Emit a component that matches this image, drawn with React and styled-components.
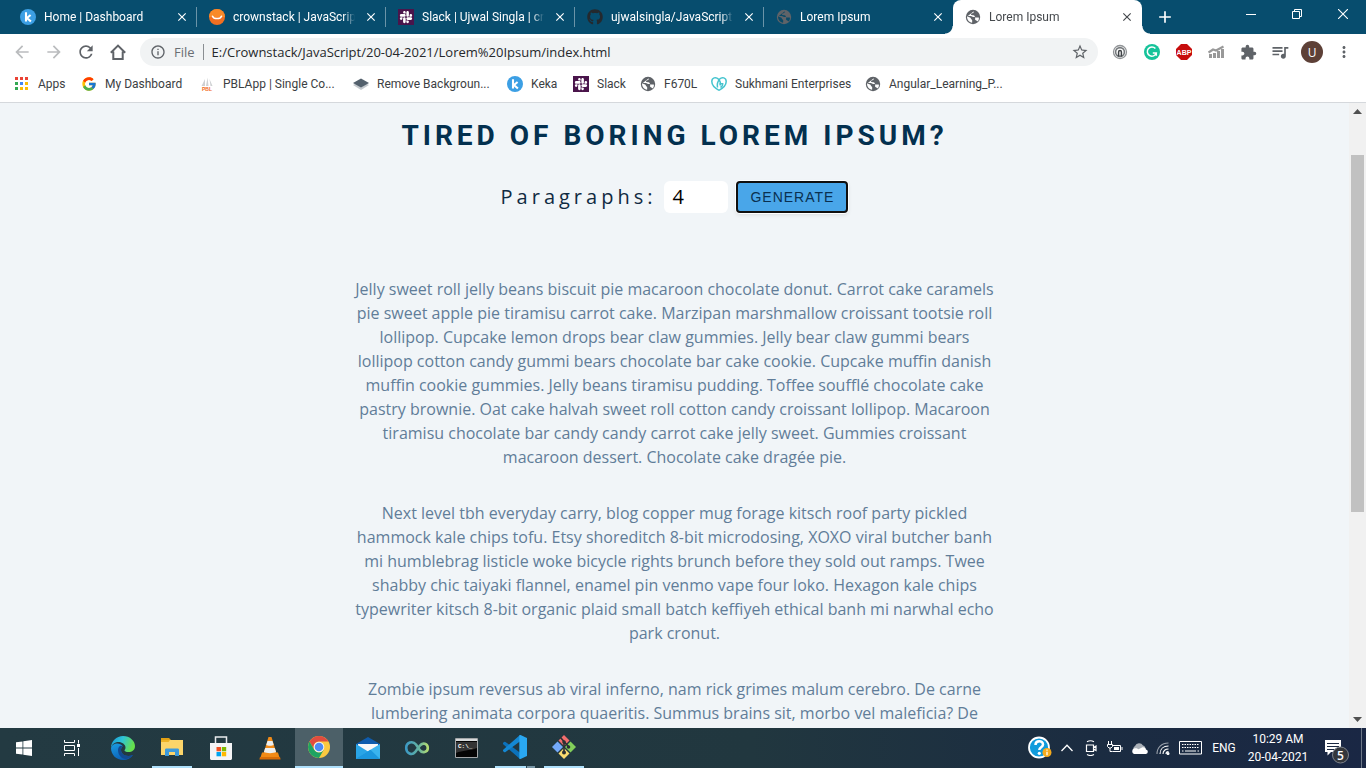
import React from "react";
import styled, { createGlobalStyle, css } from "styled-components";
import {
  MdArrowBack,
  MdArrowForward,
  MdRefresh,
  MdStarOutline,
  MdExtension,
  MdQueueMusic,
  MdMoreVert,
  MdOutlineInfo,
  MdClose,
  MdAdd,
} from "react-icons/md";
import { FaGithub, FaSlack } from "react-icons/fa";
import { FcGoogle } from "react-icons/fc";

const GlobalStyle = createGlobalStyle`
  *, *::before, *::after { box-sizing: border-box; }
  body {
    margin: 0;
    font-family: "Open Sans", "Noto Sans", sans-serif;
    background: #f1f5f8;
  }
  button { border: 0; padding: 0; background: none; color: inherit; font: inherit; }
  a { color: inherit; text-decoration: none; }
  svg { display: block; flex: none; }
`;

const Desktop = styled.div`
  display: flex;
  flex-direction: column;
  height: 100vh;
  overflow: hidden;
`;

/* ---------- browser chrome ---------- */

const TabStrip = styled.header`
  display: flex;
  flex: none;
  height: 34px;
  padding-left: 8px;
  background: #074d6e;
  color: #fff;
`;

const Tabs = styled.div`
  display: flex;
  flex: 0 1 auto;
  min-width: 0;
`;

const Tab = styled.div`
  position: relative;
  display: flex;
  align-items: center;
  gap: 8px;
  flex: 0 1 189px;
  width: 189px;
  min-width: 0;
  padding: 0 7px 0 12px;
  font: 12px Roboto, sans-serif;

  ${({ $divided }) =>
    $divided &&
    css`
      background: linear-gradient(#6b94a8, #6b94a8) right center / 1px 20px no-repeat;
    `}

  ${({ $active }) =>
    $active &&
    css`
      background: #fff;
      color: #45494d;
      border-radius: 8px 8px 0 0;
      &::before,
      &::after {
        content: "";
        position: absolute;
        bottom: 0;
        width: 8px;
        height: 8px;
      }
      &::before {
        left: -8px;
        background: radial-gradient(circle at 0 0, transparent 7px, #fff 8px);
      }
      &::after {
        right: -8px;
        background: radial-gradient(circle at 100% 0, transparent 7px, #fff 8px);
      }
    `}
`;

const TabTitle = styled.span`
  flex: 1;
  min-width: 0;
  white-space: nowrap;
  mask-image: linear-gradient(to right, #000 calc(100% - 12px), transparent);
`;

const IconButton = styled.button`
  display: flex;
  align-items: center;
  justify-content: center;
  flex: none;
  width: ${({ $size }) => $size || 32}px;
  height: ${({ $size }) => $size || 32}px;
  color: ${({ $color }) => $color || "inherit"};
`;

const NewTab = styled(IconButton)`
  margin: 3px 0 0 9px;
`;

const WindowControls = styled.div`
  display: flex;
  margin-left: auto;
`;

const WindowButton = styled.button`
  display: flex;
  align-items: center;
  justify-content: center;
  width: 46px;
  height: 28px;
`;

const Toolbar = styled.div`
  display: flex;
  align-items: center;
  flex: none;
  height: 36px;
  padding: 0 6px;
  background: #fff;
  color: #5f6368;
`;

const Omnibox = styled.form`
  display: flex;
  align-items: center;
  flex: 1;
  min-width: 0;
  height: 28px;
  margin: 0 6px;
  padding: 0 2px 0 10px;
  border-radius: 14px;
  background: #f1f3f4;
  font-size: 13px;
`;

const Scheme = styled.label`
  margin-left: 8px;
  padding-right: 8px;
  line-height: 16px;
  border-right: 1px solid #8a8e92;
  color: #6a6e73;
`;

const Address = styled.input`
  flex: 1;
  min-width: 0;
  margin: 0;
  padding: 0 8px;
  border: 0;
  outline: 0;
  background: none;
  color: #25282b;
  font: inherit;
`;

const Avatar = styled.span`
  display: flex;
  align-items: center;
  justify-content: center;
  width: 22px;
  height: 22px;
  border-radius: 50%;
  background: #5d4037;
  color: #fff;
  font-size: 12px;
`;

const Bookmarks = styled.nav`
  display: flex;
  flex: none;
  height: 33px;
  padding: 0 0 4px 14px;
  background: #fff;
  border-bottom: 1px solid #d5d8dc;
`;

const Bookmark = styled.a`
  display: flex;
  align-items: center;
  gap: 8px;
  flex: none;
  width: ${({ $width }) => $width}px;
  color: #3c4043;
  font: 12px Roboto, sans-serif;
  white-space: nowrap;
`;

/* ---------- page ---------- */

const Viewport = styled.div`
  display: flex;
  flex: 1;
  min-height: 0;
  background: #f1f5f8;
`;

const Page = styled.main`
  flex: 1;
  min-width: 0;
  overflow: hidden;
  text-align: center;
`;

const Title = styled.h1`
  margin: 0;
  padding-top: 15px;
  color: #03304f;
  font: 700 28px/36px Roboto, sans-serif;
  letter-spacing: 4px;
  text-transform: uppercase;
`;

const GenerateForm = styled.form`
  display: flex;
  align-items: center;
  justify-content: center;
  gap: 8px;
  height: 32px;
  margin: 27px 0 64px;
`;

const CountLabel = styled.label`
  padding-bottom: 2px;
  color: #102a42;
  font-size: 20px;
  letter-spacing: 4px;
`;

const CountInput = styled.input`
  width: 64px;
  height: 32px;
  padding: 2px 8px 4px;
  border: 0;
  border-radius: 6px;
  outline: 0;
  background: #fff;
  color: #000;
  font: 20px "Open Sans", sans-serif;
  appearance: textfield;
  &::-webkit-inner-spin-button { appearance: none; }
`;

const GenerateButton = styled.button`
  width: 112px;
  height: 32px;
  border: 2px solid #101010;
  border-radius: 4px;
  background: #49a6e9;
  color: #0a3050;
  font: 14px "Liberation Sans", Arial, sans-serif;
  letter-spacing: 1px;
  text-transform: uppercase;
  box-shadow: 0 0 0 1px #fff, 0 2px 4px rgba(0, 0, 0, 0.1);
`;

const Copy = styled.article`
  max-width: 642px;
  margin: 0 auto;
  color: #617d98;
  font-size: 16px;
  line-height: 24px;
`;

const Paragraph = styled.p`
  margin: 0 0 32px;
`;

const Scrollbar = styled.div`
  display: flex;
  flex-direction: column;
  align-items: center;
  flex: none;
  width: 17px;
  background: #f1f1f1;
  color: #505050;
`;

const ScrollTrack = styled.div`
  display: flex;
  flex-direction: column;
  flex: 1;
  width: 13px;
`;

const ScrollSpace = styled.div`
  flex: ${({ $share }) => $share};
`;

const ScrollThumb = styled.div`
  flex: 357;
  background: #c1c1c1;
`;

/* ---------- taskbar ---------- */

const Taskbar = styled.footer`
  display: flex;
  flex: none;
  height: 40px;
  background: linear-gradient(90deg, #233a42 0%, #21373f 55%, #1b2c41 80%, #1a2744 100%);
  color: #fff;
  font: 12px Roboto, sans-serif;
`;

const TaskGroup = styled.div`
  display: flex;
  gap: ${({ $gap }) => $gap || 0}px;
  margin-right: 3px;
`;

const TaskButton = styled.button`
  display: flex;
  flex-direction: column;
  align-items: center;
  width: 48px;
  height: 40px;
  background: ${({ $active }) => ($active ? "#4c6068" : "none")};
`;

const TaskIcon = styled.span`
  display: flex;
  align-items: center;
  justify-content: center;
  flex: 1;
`;

const Running = styled.span`
  width: ${({ $wide }) => ($wide ? "48px" : "40px")};
  height: 2px;
  background: ${({ $multi }) =>
    $multi ? "linear-gradient(90deg, #aee0fb 31px, #2b4450 31px, #2b4450 32px, #7896a6 32px)" : "#aee0fb"};
`;

const Tray = styled.div`
  display: flex;
  margin-left: auto;
`;

const TrayButton = styled.button`
  display: flex;
  align-items: center;
  justify-content: center;
  width: ${({ $width }) => $width || 24}px;
  line-height: 18px;
  white-space: nowrap;
`;

const ShowDesktop = styled.button`
  width: 5px;
  border-left: 1px solid #6d7888;
`;

/* ---------- drawings ---------- */

const KekaIcon = () => (
  <svg width="16" height="16" viewBox="0 0 16 16">
    <circle cx="8" cy="8" r="8" fill="#3c9fe4" />
    <path d="M6 3.2v9.4M10.6 6L7 9l3.9 3.6" stroke="#fff" strokeWidth="2.1" fill="none" />
  </svg>
);

const SmileIcon = () => (
  <svg width="16" height="16" viewBox="0 0 16 16">
    <circle cx="8" cy="8" r="8" fill="#f26f21" />
    <path d="M0 8a8 8 0 0 1 16 0z" fill="#f88a2a" />
    <path d="M3.5 7.2c1.200 3.200 7.800 3.200 9 0" stroke="#fff" strokeWidth="1.5" fill="none" strokeLinecap="round" />
  </svg>
);

const SlackIcon = () => (
  <svg width="16" height="16" viewBox="0 0 16 16">
    <rect width="16" height="16" fill="#4a154b" />
    <FaSlack x="1" y="1" size={14} color="#fff" />
  </svg>
);

const GlobeIcon = ({ color = "#5f6368", land = "#fff" }) => (
  <svg width="16" height="16" viewBox="0 0 16 16">
    <circle cx="8" cy="8" r="7.2" fill={color} />
    <path
      d="M8.800 2.200c-.3.900.1 1.300-.7 1.900-.9.600-2.100.2-2.100 1.200 0 .8.800.9 1.700.9 1.300 0 1.900.3 2.100 1.400.1.900.9 1 1.800 1h2.200c.3 1.200 0 2.400-.7 3.400-.5.800-.8-.6-1.900-.6-1.200 0-1.500-1.500-.9-2.300.3-.6-.4-1.200-1.300-1.100-1.300.1-1.600-.4-2.500-.8-.9-.3-2.600-.2-4 .1M2 7.300c1 .9 2.200.9 3.100 1.300.9.500.6 1.500 1.500 1.900.9.300.6 1.900.5 3.200C4.200 13.400 1.900 10.900 2 7.300"
      fill={land}
    />
  </svg>
);

const AppsIcon = () => {
  const colors = ["#ea4335", "#ea4335", "#ea4335", "#34a853", "#4285f4", "#fbbc05", "#34a853", "#fbbc05", "#fbbc05"];
  return (
    <svg width="16" height="16" viewBox="0 0 16 16">
      {colors.map((fill, i) => (
        <rect key={i} x={1 + (i % 3) * 5} y={1 + Math.floor(i / 3) * 5} width="3" height="3" fill={fill} />
      ))}
    </svg>
  );
};

const PblIcon = () => (
  <svg width="16" height="16" viewBox="0 0 16 16">
    <path d="M6 3v7H2.500zM8.500 1.500l1 8.500H7zM10.500 3l3 7h-2z" fill="#cfd1d3" />
    <text x="8" y="15" textAnchor="middle" fontSize="5" fontWeight="700" fill="#f26a1e" fontFamily="Liberation Sans">
      PBL
    </text>
  </svg>
);

const LayersIcon = () => (
  <svg width="16" height="16" viewBox="0 0 16 16">
    <path d="M0 9l8-4 8 4-8 5z" fill="#c3c8cd" />
    <path d="M0 7l8-4.500L16 7l-8 4.500z" fill="#53606c" />
  </svg>
);

const HeartIcon = () => (
  <svg width="16" height="16" viewBox="0 0 16 16" fill="none" stroke="#46c4cf" strokeWidth="1.500">
    <path d="M8 14.300C3.500 12 .8 9 .8 5.600c0-4 4.200-5 6.500-2.600 1.800 1.900 2.300 5 1.700 6.500" />
    <path d="M8 14.300c4.500-2.300 7.200-5.300 7.200-8.700 0-4-4.200-5-6.500-2.600C6.500 5.400 6 8.500 6.500 11.500M8.500 7.800h3.200c.2 1.500-.6 2.700-2.200 3.700" />
  </svg>
);

const HomeIcon = () => (
  <svg width="18" height="18" viewBox="0 0 18 18" fill="none" stroke="#5f6368" strokeWidth="2">
    <path d="M1.800 9.700L9 2.600l7.200 7.100M4.300 8.500v7.500h9.400V8.500" />
  </svg>
);

const PodIcon = () => (
  <svg width="16" height="16" viewBox="0 0 16 16" fill="none">
    <circle cx="8" cy="8" r="6.500" stroke="#909396" strokeWidth="1.300" />
    <circle cx="8" cy="8" r="4.400" stroke="#75797c" strokeWidth="1.600" />
    <path d="M6.600 12.500V8a1.400 1.400 0 0 1 2.800 0v4.500" stroke="#3f4346" strokeWidth="1.500" />
  </svg>
);

const GrammarIcon = () => (
  <svg width="16" height="16" viewBox="0 0 16 16">
    <circle cx="8" cy="8" r="8" fill="#15c39a" />
    <path d="M11.400 4.600a4.600 4.600 0 1 0 .9 4.300H8.800M12.300 9v2.800" stroke="#fff" strokeWidth="1.500" fill="none" />
  </svg>
);

const AbpIcon = () => (
  <svg width="16" height="16" viewBox="0 0 16 16">
    <path d="M5 0h6l5 5v6l-5 5H5l-5-5V5z" fill="#c70d0d" />
    <text x="8" y="10.500" textAnchor="middle" fontSize="7" fontWeight="700" fill="#fff" fontFamily="Liberation Sans">
      ABP
    </text>
  </svg>
);

const BarsIcon = () => (
  <svg width="16" height="16" viewBox="0 0 16 16" fill="#999">
    <path d="M1 10h3v4H1zM5 9h3v5H5zM9 7h3v7H9zM13 5h3v9h-3z" />
    <path d="M.5 8.500L5 5.500l3 1L15.500 2.500" fill="none" stroke="#999" strokeWidth="2.200" />
  </svg>
);

const MinimizeGlyph = () => (
  <svg width="10" height="10" viewBox="0 0 10 10"><path d="M0 5.500h10" stroke="#fff" /></svg>
);
const RestoreGlyph = () => (
  <svg width="10" height="10" viewBox="0 0 10 10" fill="none" stroke="#fff"><path d="M.5 2.500h7v7h-7zM2.500 2.500v-2h7v7h-2" /></svg>
);
const CloseGlyph = () => (
  <svg width="10" height="10" viewBox="0 0 10 10"><path d="M0 0l10 10M10 0L0 10" stroke="#fff" strokeWidth="1.100" /></svg>
);

const ScrollArrow = ({ down }) => (
  <svg width="17" height="17" viewBox="0 0 17 17">
    <path d={down ? "M4 6h9l-4.500 5z" : "M4 11h9L8.500 6z"} fill="#505050" />
  </svg>
);

const WindowsIcon = () => (
  <svg width="16" height="16" viewBox="0 0 16 16" fill="#fff">
    <path d="M0 2.300L6.500 1.400v6.200H0zM7.300 1.300L16 0v7.600H7.300zM0 8.400h6.500v6.200L0 13.700zM7.300 8.400H16V16l-8.700-1.300z" />
  </svg>
);

const TaskViewIcon = () => (
  <svg width="16" height="16" viewBox="0 0 16 16" fill="none" stroke="#fff">
    <path d="M.5 0v2.500h10V0M.5 16v-2.500h10V16M.5 5.500h10v5H.5zM14.500 0v3.500M14.500 8v8" />
    <path d="M13 4h3v3h-3z" fill="#fff" stroke="none" />
  </svg>
);

const EdgeIcon = () => (
  <svg width="24" height="24" viewBox="0 0 24 24">
    <defs>
      <linearGradient id="edgeTop" x1="0" y1="0" x2="1" y2=".3">
        <stop offset="0" stopColor="#1696d8" />
        <stop offset=".5" stopColor="#2fc4d6" />
        <stop offset="1" stopColor="#66e04c" />
      </linearGradient>
      <linearGradient id="edgeBody" x1="0" y1="0" x2=".5" y2="1">
        <stop offset="0" stopColor="#1b9de2" />
        <stop offset="1" stopColor="#0b5fb5" />
      </linearGradient>
    </defs>
    <path d="M0 12c0 7 5.500 12 12 12 4.500 0 8-2 10-5-7 2.500-12-.5-12-5 0-2 1-3 1.800-3.700C9 6 1 6.500 0 12z" fill="url(#edgeBody)" />
    <path d="M7 14c0 5 4 9.500 8.500 9 3-.7 5.200-2 6.500-4-6 2.500-12-.5-12-5 0-2 1-3 1.800-3.700C9.500 8.500 7 11 7 14z" fill="#134a91" />
    <path d="M0 12C0 5 5.500 0 12 0c7 0 12 5 12 10 0 4-3 6-6.500 6-2.500 0-4-.8-4-1.600 0-.7 1-1 1-3C14.500 8.500 11 6 7.500 6 3.500 6 .7 8.600 0 12z" fill="url(#edgeTop)" />
  </svg>
);

const ExplorerIcon = () => (
  <svg width="22" height="20" viewBox="0 0 22 20">
    <path d="M0 1h8l2 2v4H0z" fill="#e2a014" />
    <path d="M0 3h22v15H0z" fill="#fcd56a" />
    <path d="M0 3h9L7.500 5H0z" fill="#eeb326" />
    <path d="M4 19v-6c0-1 .5-1.500 1.500-1.500h11c1 0 1.500.5 1.500 1.500v6h-4v-4H8v4z" fill="#3d9adb" />
  </svg>
);

const StoreIcon = () => (
  <svg width="24" height="24" viewBox="0 0 24 24">
    <path d="M6.500 8V1h11v7" fill="none" stroke="#e9ebed" strokeWidth="1.500" />
    <path d="M1 7h22v15.500c0 .8-.7 1.500-1.500 1.500h-19C1.700 24 1 23.300 1 22.500z" fill="#f5f5f6" />
    <path d="M7.500 11H12v4.300H7.500z" fill="#f25022" />
    <path d="M12.800 11h4.400v4.300h-4.400z" fill="#7fba00" />
    <path d="M7.500 16H12v4.300H7.500z" fill="#00a4ef" />
    <path d="M12.800 16h4.400v4.300h-4.400z" fill="#ffb900" />
  </svg>
);

const VlcIcon = () => (
  <svg width="22" height="24" viewBox="0 0 22 24">
    <path d="M3 16.500h16l2 6.500H1z" fill="#f18a14" />
    <path d="M9.500 1h3L18 19c-2 2-12 2-14 0z" fill="#f28b18" />
    <path d="M8.500 5h5l1.200 4c-1.500 1-6 1-7.500 0zM6.200 12h9.600l1.300 4c-2.500 1.500-9.600 1.500-12.200 0z" fill="#eceff0" />
    <path d="M1 21h20l.6 2.500H.4z" fill="#d96d07" />
  </svg>
);

const ChromeIcon = () => (
  <svg width="22" height="22" viewBox="0 0 22 22">
    <circle cx="11" cy="11" r="11" fill="#fbc940" />
    <path d="M1.500 5.500a11 11 0 0 1 19 0H11a5.500 5.500 0 0 0-4.800 8.200z" fill="#e04c3f" />
    <path d="M1.500 5.500A11 11 0 0 0 11 22l4.800-8.300a5.500 5.500 0 0 1-9.600 0z" fill="#1ea362" />
    <circle cx="11" cy="11" r="5.300" fill="#f3f3f3" />
    <circle cx="11" cy="11" r="4.300" fill="#4c8bf5" />
  </svg>
);

const MailIcon = () => (
  <svg width="24" height="22" viewBox="0 0 24 22">
    <path d="M0 7L12 0l12 7v3H0z" fill="#0f5cad" />
    <path d="M2 7h20v2L12 17 2 9z" fill="#f8f8f8" />
    <path d="M0 7l12 7.500V22H1c-.600 0-1-.400-1-1z" fill="#2aa5e6" />
    <path d="M24 7L0 21.500c.200.300.500.500 1 .500h22c.600 0 1-.400 1-1z" fill="#3ab4ef" />
    <path d="M0 21.500L14.500 12.700 24 22H1c-.500 0-.800-.200-1-.500z" fill="#1c97de" />
  </svg>
);

const InfinityIcon = () => (
  <svg width="26" height="16" viewBox="0 0 26 16" fill="none">
    <defs>
      <linearGradient id="loop" x1="0" x2="1">
        <stop offset="0" stopColor="#3d9ac4" />
        <stop offset=".6" stopColor="#65b3a0" />
        <stop offset="1" stopColor="#b3dc72" />
      </linearGradient>
    </defs>
    <path
      d="M11 12.200C8 15.800 2.200 13.500 2.200 8S8.500.200 12 4.500l3.500 5.300c2.500 4 8.300 2.500 8.300-1.800s-5.300-6-8-2.200L11 12.200z"
      stroke="url(#loop)"
      strokeWidth="2.600"
    />
  </svg>
);

const TerminalIcon = () => (
  <svg width="23" height="20" viewBox="0 0 23 20">
    <path d="M.5.500h22v19H.5z" fill="#050505" stroke="#a3a6a8" />
    <path d="M1 1h21v2H1z" fill="#d8dadb" />
    <path d="M1 4h21v6c-8 3-14 2-21 5z" fill="#343434" />
    <text x="3" y="9.500" fontSize="6" fontWeight="700" fill="#fff" fontFamily="Liberation Mono">
      C:\_
    </text>
  </svg>
);

const CodeIcon = () => (
  <svg width="24" height="24" viewBox="0 0 24 24">
    <path d="M17.500 18L2.500 7a1.200 1.200 0 0 0-1.500 0l-.8.800a1 1 0 0 0 0 1.500L17 24z" fill="#0c72bb" />
    <path d="M17.500 6L2.500 17a1.200 1.200 0 0 1-1.500 0l-.8-.8a1 1 0 0 1 0-1.500L17 0z" fill="#1488d3" />
    <path d="M17.500 0L24 3v18l-6.500 3c-.7.200-1.200-.300-1.200-1V1c0-.7.500-1.200 1.200-1z" fill="#2aa8f2" />
  </svg>
);

const GitIcon = () => (
  <svg width="24" height="24" viewBox="0 0 24 24">
    <path d="M12 0l5.500 5.500L12 11 6.500 5.500z" fill="#f26d6d" />
    <path d="M5.500 6.500L11 12l-5.500 5.500L0 12z" fill="#74a9fa" />
    <path d="M18.500 6.500L24 12l-5.500 5.500L13 12z" fill="#82cf5a" />
    <path d="M12 13l5.500 5.500L12 24l-5.500-5.500z" fill="#fbdc70" />
    <path d="M12 6v11M8.500 2.500l3.500 4 4.500 5" stroke="#2b3033" strokeWidth="1.600" fill="none" />
    <g fill="#2b3033"><circle cx="12" cy="7" r="1.800" /><circle cx="12" cy="17.500" r="2" /><circle cx="16.500" cy="12" r="1.800" /></g>
  </svg>
);

const HelpIcon = () => (
  <svg width="24" height="24" viewBox="0 0 24 24">
    <circle cx="11" cy="11.500" r="10" fill="#109bdc" stroke="#fff" strokeWidth="1.800" />
    <path d="M7.500 9c0-5 7.500-4.800 7.500-.5 0 2.700-3.700 2.700-3.700 5.500" fill="none" stroke="#fff" strokeWidth="2.500" />
    <circle cx="11.300" cy="17.300" r="1.600" fill="#fff" />
    <circle cx="19" cy="16.500" r="4.500" fill="#f6ab1c" />
    <path d="M19 13.500v1.300M19 15.800v3.500" stroke="#fff" strokeWidth="1.300" />
  </svg>
);

const ChevronIcon = () => (
  <svg width="12" height="8" viewBox="0 0 12 8" fill="none" stroke="#fff" strokeWidth="1.300"><path d="M.5 7L6 1.200 11.500 7" /></svg>
);
const MeetIcon = () => (
  <svg width="14" height="16" viewBox="0 0 14 16" fill="none" stroke="#fff" strokeWidth="1.200">
    <path d="M2.500 5h7v6.500h-7zM9.500 7.500l2.500-1.500v4.500l-2.500-1.500M3 1.800c2-1.200 5-1.200 7 0M3 14.500c2 1.200 5 1.200 7 0" />
  </svg>
);
const BatteryIcon = () => (
  <svg width="16" height="14" viewBox="0 0 16 14" fill="none" stroke="#fff">
    <path d="M5.500 4.500h8v6h-8M15 6v3M1.500 0v3M4.500 0v3M.500 3.500h5v2l-1.500 1.500h-2L.500 5.500zM3 7v3.500h2.500" />
    <path d="M7 6h5v3H7z" fill="#fff" stroke="none" />
  </svg>
);
const CloudIcon = () => (
  <svg width="17" height="11" viewBox="0 0 17 11">
    <path d="M3 8a3.300 3.300 0 0 1 1-5 4.500 4.500 0 0 1 8-.5c2 .5 2.500 2 2.500 3.500z" fill="#aab0b8" />
    <path d="M3 11a3 3 0 0 1 0-5.500c2-.8 3.500 0 4.500.7L11 4.500c2-.500 3.500.500 4 2A2.300 2.300 0 0 1 15 11z" fill="#fff" />
  </svg>
);
const WifiIcon = () => (
  <svg width="14" height="14" viewBox="0 0 14 14" fill="none" stroke="#fff" strokeWidth="1.100">
    <path d="M1 13C1 6.500 5.500 2 12.500 2" opacity=".55" />
    <path d="M4 13c0-5 3.500-8 8.500-8M7 13c0-3.300 2.500-5 5.500-5M10 13c0-1.500 1-2.500 2.500-2.500" />
    <circle cx="12" cy="12.500" r="1" fill="#fff" />
  </svg>
);
const KeyboardIcon = () => (
  <svg width="23" height="14" viewBox="0 0 23 14" fill="none" stroke="#fff">
    <path d="M.5.500h22v12.500H.500z" />
    <path d="M3 3.500h17M3 6.500h17" strokeDasharray="1.500 1" />
    <path d="M3 10h1.500M6 10h11M18.500 10H20" />
  </svg>
);
const ActionCenterIcon = () => (
  <svg width="26" height="32" viewBox="0 0 26 32">
    <path d="M1 8h16v12H7l-3.500 3.500V20H1z" fill="#fff" />
    <path d="M3 11.500h12M3 14.500h12M3 17.500h7" stroke="#1b2942" />
    <circle cx="16.500" cy="23" r="8" fill="#34373c" stroke="#7d838c" />
    <text x="16.500" y="27.500" textAnchor="middle" fontSize="12" fontWeight="600" fill="#fff" fontFamily="Open Sans">
      5
    </text>
  </svg>
);

/* ---------- content ---------- */

const tabs = [
  { title: "Home | Dashboard", icon: <KekaIcon /> },
  { title: "crownstack | JavaScript t", icon: <SmileIcon /> },
  { title: "Slack | Ujwal Singla | cro", icon: <SlackIcon /> },
  { title: "ujwalsingla/JavaScript: J", icon: <FaGithub size={16} color="#24292e" /> },
  { title: "Lorem Ipsum", icon: <GlobeIcon color="#5f6368" land="#0a4966" /> },
  { title: "Lorem Ipsum", icon: <GlobeIcon />, active: true },
];

const bookmarks = [
  { title: "Apps", icon: <AppsIcon />, width: 67 },
  { title: "My Dashboard", icon: <FcGoogle size={16} />, width: 118 },
  { title: "PBLApp | Single Co...", icon: <PblIcon />, width: 154 },
  { title: "Remove Backgroun...", icon: <LayersIcon />, width: 154 },
  { title: "Keka", icon: <KekaIcon />, width: 66 },
  { title: "Slack", icon: <SlackIcon />, width: 67 },
  { title: "F670L", icon: <GlobeIcon />, width: 71 },
  { title: "Sukhmani Enterprises", icon: <HeartIcon />, width: 154 },
  { title: "Angular_Learning_P...", icon: <GlobeIcon />, width: 154 },
];

const extensions = [
  { name: "Podcasts", icon: <PodIcon /> },
  { name: "Grammar", icon: <GrammarIcon /> },
  { name: "Ad blocker", icon: <AbpIcon /> },
  { name: "Analytics", icon: <BarsIcon /> },
  { name: "Extensions", icon: <MdExtension size={17} /> },
  { name: "Media", icon: <MdQueueMusic size={20} /> },
  { name: "Profile", icon: <Avatar>U</Avatar> },
  { name: "Menu", icon: <MdMoreVert size={18} /> },
];

const pinned = [
  { name: "Edge", icon: <EdgeIcon /> },
  { name: "File Explorer", icon: <ExplorerIcon />, running: true },
  { name: "Store", icon: <StoreIcon /> },
  { name: "VLC", icon: <VlcIcon /> },
  { name: "Chrome", icon: <ChromeIcon />, running: true, active: true },
  { name: "Mail", icon: <MailIcon /> },
  { name: "Loop", icon: <InfinityIcon /> },
  { name: "Terminal", icon: <TerminalIcon /> },
  { name: "Code", icon: <CodeIcon />, running: true, multi: true },
  { name: "Git", icon: <GitIcon />, running: true },
];

const paragraphs = [
  "Jelly sweet roll jelly beans biscuit pie macaroon chocolate donut. Carrot cake caramels pie sweet apple pie tiramisu carrot cake. Marzipan marshmallow croissant tootsie roll lollipop. Cupcake lemon drops bear claw gummies. Jelly bear claw gummi bears lollipop cotton candy gummi bears chocolate bar cake cookie. Cupcake muffin danish muffin cookie gummies. Jelly beans tiramisu pudding. Toffee soufflé chocolate cake pastry brownie. Oat cake halvah sweet roll cotton candy croissant lollipop. Macaroon tiramisu chocolate bar candy candy carrot cake jelly sweet. Gummies croissant macaroon dessert. Chocolate cake dragée pie.",
  "Next level tbh everyday carry, blog copper mug forage kitsch roof party pickled hammock kale chips tofu. Etsy shoreditch 8-bit microdosing, XOXO viral butcher banh mi humblebrag listicle woke bicycle rights brunch before they sold out ramps. Twee shabby chic taiyaki flannel, enamel pin venmo vape four loko. Hexagon kale chips typewriter kitsch 8-bit organic plaid small batch keffiyeh ethical banh mi narwhal echo park cronut.",
  "Zombie ipsum reversus ab viral inferno, nam rick grimes malum cerebro. De carne lumbering animata corpora quaeritis. Summus brains sit, morbo vel maleficia? De",
];

export default function App() {
  return (
    <Desktop>
      <GlobalStyle />
      <TabStrip>
        <Tabs role="tablist">
          {tabs.map((tab, i) => (
            <Tab key={i} role="tab" aria-selected={!!tab.active} $active={tab.active} $divided={i < 4}>
              {tab.icon}
              <TabTitle>{tab.title}</TabTitle>
              <IconButton type="button" $size={16} aria-label="Close tab">
                <MdClose size={14} />
              </IconButton>
            </Tab>
          ))}
        </Tabs>
        <NewTab type="button" $size={28} aria-label="New tab">
          <MdAdd size={20} />
        </NewTab>
        <WindowControls>
          <WindowButton type="button" aria-label="Minimize"><MinimizeGlyph /></WindowButton>
          <WindowButton type="button" aria-label="Restore"><RestoreGlyph /></WindowButton>
          <WindowButton type="button" aria-label="Close"><CloseGlyph /></WindowButton>
        </WindowControls>
      </TabStrip>

      <Toolbar>
        <IconButton type="button" $color="#babcbe" aria-label="Back"><MdArrowBack size={20} /></IconButton>
        <IconButton type="button" $color="#babcbe" aria-label="Forward"><MdArrowForward size={20} /></IconButton>
        <IconButton type="button" aria-label="Reload"><MdRefresh size={20} /></IconButton>
        <IconButton type="button" aria-label="Home"><HomeIcon /></IconButton>
        <Omnibox onSubmit={(e) => e.preventDefault()}>
          <MdOutlineInfo size={16} />
          <Scheme htmlFor="address">File</Scheme>
          <Address id="address" type="text" defaultValue="E:/Crownstack/JavaScript/20-04-2021/Lorem%20Ipsum/index.html" />
          <IconButton type="button" aria-label="Bookmark this page"><MdStarOutline size={18} /></IconButton>
        </Omnibox>
        {extensions.map((item) => (
          <IconButton key={item.name} type="button" aria-label={item.name}>{item.icon}</IconButton>
        ))}
      </Toolbar>

      <Bookmarks>
        {bookmarks.map((item) => (
          <Bookmark key={item.title} href="#" $width={item.width}>
            {item.icon}
            {item.title}
          </Bookmark>
        ))}
      </Bookmarks>

      <Viewport>
        <Page>
          <Title>Tired of boring lorem ipsum?</Title>
          <GenerateForm onSubmit={(e) => e.preventDefault()}>
            <CountLabel htmlFor="count">Paragraphs:</CountLabel>
            <CountInput id="count" type="number" defaultValue="4" />
            <GenerateButton type="submit">Generate</GenerateButton>
          </GenerateForm>
          <Copy>
            {paragraphs.map((text) => (
              <Paragraph key={text}>{text}</Paragraph>
            ))}
          </Copy>
        </Page>
        <Scrollbar>
          <ScrollArrow />
          <ScrollTrack>
            <ScrollSpace $share={35} />
            <ScrollThumb />
            <ScrollSpace $share={199} />
          </ScrollTrack>
          <ScrollArrow down />
        </Scrollbar>
      </Viewport>

      <Taskbar>
        <TaskGroup>
          <TaskButton type="button" aria-label="Start"><TaskIcon><WindowsIcon /></TaskIcon></TaskButton>
          <TaskButton type="button" aria-label="Task view"><TaskIcon><TaskViewIcon /></TaskIcon></TaskButton>
        </TaskGroup>
        <TaskGroup $gap={1}>
          {pinned.map((app) => (
            <TaskButton key={app.name} type="button" aria-label={app.name} $active={app.active}>
              <TaskIcon>{app.icon}</TaskIcon>
              {app.running && <Running $wide={app.active} $multi={app.multi} />}
            </TaskButton>
          ))}
        </TaskGroup>
        <Tray>
          <TrayButton type="button" $width={30} aria-label="Help"><HelpIcon /></TrayButton>
          <TrayButton type="button" aria-label="Hidden icons"><ChevronIcon /></TrayButton>
          <TrayButton type="button" aria-label="Meet now"><MeetIcon /></TrayButton>
          <TrayButton type="button" aria-label="Battery"><BatteryIcon /></TrayButton>
          <TrayButton type="button" aria-label="Cloud storage"><CloudIcon /></TrayButton>
          <TrayButton type="button" aria-label="Network"><WifiIcon /></TrayButton>
          <TrayButton type="button" $width={30} aria-label="Keyboard"><KeyboardIcon /></TrayButton>
          <TrayButton type="button" $width={38}>ENG</TrayButton>
          <TrayButton type="button" $width={70}>
            10:29 AM
            <br />
            20-04-2021
          </TrayButton>
          <TrayButton type="button" $width={48} aria-label="Notifications"><ActionCenterIcon /></TrayButton>
          <ShowDesktop type="button" aria-label="Show desktop" />
        </Tray>
      </Taskbar>
    </Desktop>
  );
}
